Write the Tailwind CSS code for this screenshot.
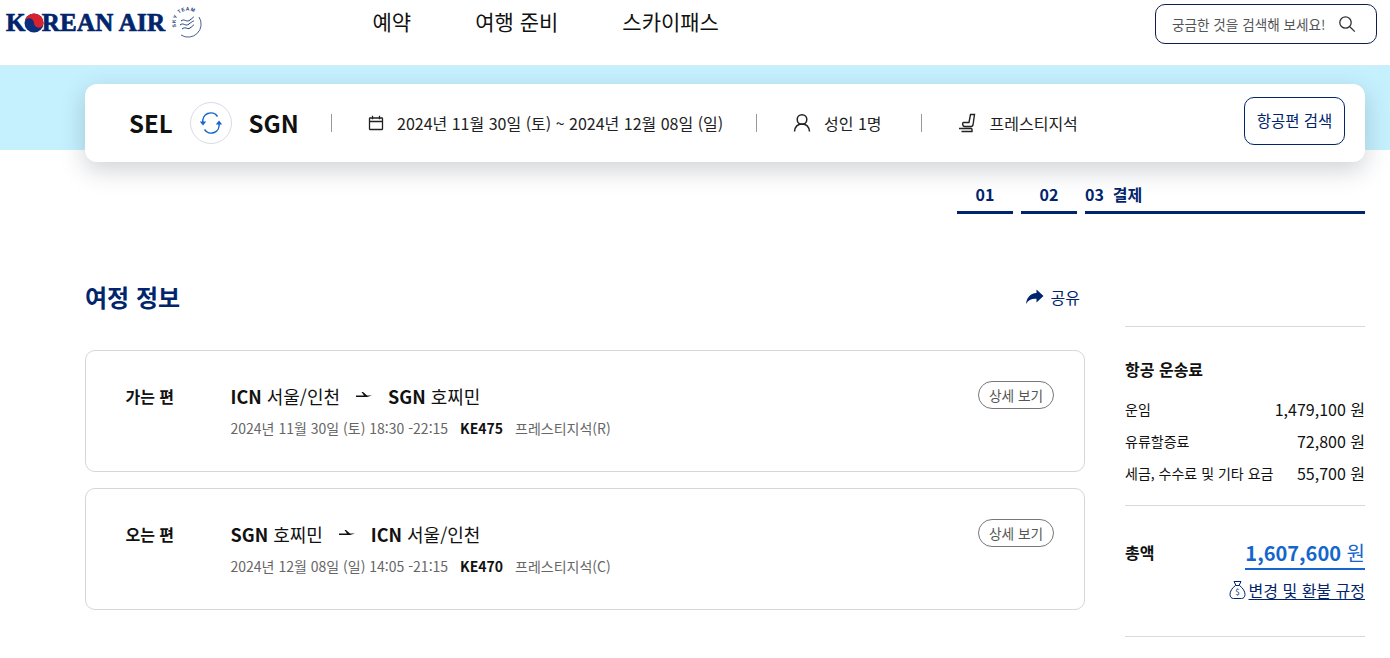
<!doctype html>
<html lang="ko"><head><meta charset="utf-8"><script src="https://cdn.jsdelivr.net/npm/@tailwindcss/browser@4"></script></head>
<body class="bg-white h-[658px] overflow-hidden font-['Noto_Sans_CJK_KR','Noto_Sans',sans-serif] text-[#111]">
<header class="h-[65px] flex items-start relative">
  <div class="w-[372.500px] pl-[6px] pt-[6px] flex items-start shrink-0">
    <div class="flex items-center h-[33px] w-[160px] whitespace-nowrap text-[#00256c] font-['Liberation_Serif',serif] font-bold text-[25px] tracking-[0.25px] leading-none [-webkit-text-stroke:0.7px_#00256c]">K<svg class="w-[20px] h-[20px] mx-[-2px] shrink-0" viewBox="0 0 20 20"><circle cx="10" cy="10" r="9.500" fill="#0b2f7c"/><path d="M.5 10A9.500 9.500 0 0 1 19.500 10 4.750 4.750 0 0 1 10 10 4.750 4.750 0 0 0 .5 10Z" fill="#d8232f"/></svg>REAN AIR</div>
    <svg class="w-[32px] h-[32px] ml-[5px] mt-[0px]" viewBox="0 0 32 32" fill="none" stroke="#1c3a75"><defs><path id="arc" d="M5.500 21A12 12 0 0 1 26 9"/></defs><path d="M28 11a13 13 0 0 1-18 18" stroke-width=".8"/><path d="M10 15c4-3 5 2 9-1s3-3 4-3M9 19c4-3 5 2 9-1s4-3 5-3M11 23c4-3 5 1 8-1s3-3 4-3" stroke-width="1"/><text font-size="5" fill="#1c3a75" stroke="none" font-family="Liberation Sans" font-weight="700" letter-spacing=".6"><textPath href="#arc">SKY TEAM</textPath></text></svg>
  </div>
  <nav class="flex gap-[64px] text-[21px] leading-[28px] pt-[7px] text-[#111]"><span>예약</span><span>여행 준비</span><span>스카이패스</span></nav>
  <div class="absolute left-[1155px] top-[4px] w-[222px] h-[40px] border border-[#0e1f4d] rounded-[10px] flex items-center pl-[16px] gap-[13px] text-[13.600px] text-[#555]"><span>궁금한 것을 검색해 보세요!</span><svg class="w-[18px] h-[18px]" viewBox="0 0 18 18" fill="none" stroke="#333" stroke-width="1.300"><circle cx="7.500" cy="7.500" r="5.700"/><path d="m11.800 11.800 5 4.800"/></svg></div>
</header>
<div class="h-[85px] bg-[#c5f0fe] border-t border-[#d5ecf5] pl-[85px] pr-[25px] pt-[18px]">
  <section class="h-[78px] bg-white rounded-xl shadow-[0_8px_24px_rgba(40,50,70,0.22)] flex items-center pl-[44px] relative">
    <b class="text-[24px] font-bold w-[61px]">SEL</b>
    <span class="w-[42px] h-[42px] rounded-full border border-[#d6dde5] flex items-center justify-center"><svg class="w-[24px] h-[24px]" viewBox="0 0 24 24" fill="none" stroke="#1466cc" stroke-width="1.500"><path d="M4 11.500A8 8 0 0 1 18.500 5.500M20 12.500A8 8 0 0 1 5.500 18.500"/><path d="M.8 10.500h6.400L4 14.500ZM23.200 13.500h-6.400l3.200-4Z" fill="#1466cc" stroke="none"/></svg></span>
    <b class="text-[24px] font-bold ml-[16.500px] w-[82.500px]">SGN</b>
    <span class="w-px h-[18px] bg-[#999]"></span>
    <svg class="w-[16px] h-[16px] ml-[36px]" viewBox="0 0 16 16" fill="none" stroke="#222" stroke-width="1.300"><rect x="1.500" y="3" width="13" height="11.500" rx=".5"/><path d="M1.500 6.500h13M4.500 .8v3.500M11.500 .8v3.500"/></svg>
    <span class="ml-[13px] w-[359px] text-[16px] text-[#222]">2024년 11월 30일 (토) ~ 2024년 12월 08일 (일)</span>
    <span class="w-px h-[18px] bg-[#999]"></span>
    <svg class="w-[18px] h-[20px] ml-[36px]" viewBox="0 0 18 20" fill="none" stroke="#222" stroke-width="1.500"><circle cx="9" cy="6.500" r="4.800"/><path d="M1.500 18.500c.5-5 3.500-7.500 7.500-7.500s7 2.500 7.500 7.500"/></svg>
    <span class="ml-[13px] w-[97px] text-[16px] text-[#222]">성인 1명</span>
    <span class="w-px h-[18px] bg-[#999]"></span>
    <svg class="w-[18px] h-[20px] ml-[36px]" viewBox="0 0 18 20" fill="none" stroke="#222" stroke-width="1.400"><path d="M12.500 1.500h4L15 12c-.2 1-.8 1.500-2 1.500H6.500c-2 0-2.500-4-1-4h5.500ZM1 15.500h13M3.500 18.500h10.500v-3"/></svg>
    <span class="ml-[13.500px] text-[16px] text-[#222]">프레스티지석</span>
    <button class="absolute left-[1159px] top-[13px] w-[101px] h-[48px] border border-[#00256c] rounded-[10px] text-[15.500px] text-[#00256c]">항공편 검색</button>
  </section>
</div>
<main class="pl-[85px] pr-[25px] relative">
  <div class="flex justify-end gap-[8px] pt-[33px] h-[64px] text-[#00256c] font-bold text-[16px] leading-[22px]">
    <div class="w-[56px] h-[31px] border-b-[3px] border-[#00256c] text-center">01</div>
    <div class="w-[56px] h-[31px] border-b-[3px] border-[#00256c] text-center">02</div>
    <div class="w-[280px] h-[31px] border-b-[3px] border-[#00256c] whitespace-pre">03  결제</div>
  </div>
  <div class="flex gap-[40px]">
    <div class="w-[1000px] shrink-0">
      <div class="flex justify-between items-center pt-[67px] pr-[5px] h-[113px]">
        <h1 class="text-[24px] font-bold text-[#00256c] leading-[34px] pb-[15px]">여정 정보</h1>
        <span class="flex items-center gap-[7px] text-[16px] text-[#00256c] pb-[15px]"><svg class="w-[19px] h-[16px]" viewBox="0 0 18 16" fill="#00256c"><path d="M11 .5 18 7l-7 6.500V9.800C6 9.500 3 11 .5 15 1 9 4.500 4.500 11 4Z"/></svg>공유</span>
      </div>
      <article class="h-[122px] mt-[23px] border border-[#d4d6da] rounded-[10px] flex relative">
        <b class="w-[144.500px] pt-[34px] text-center text-[16px] leading-[22px] font-bold pr-[17px]">가는 편</b>
        <div class="pt-[32px]">
          <div class="flex items-center text-[18px] leading-[26px]"><b class="font-bold mr-[5px]">ICN</b>서울/인천<svg class="w-[16px] h-[8px] mx-[16px]" viewBox="0 0 16 8" fill="#111"><path d="M0 3.500h8L5.500 0h1.500l4 3.500h5L11 5H0Z"/></svg><b class="font-bold mr-[5px]">SGN</b>호찌민</div>
          <div class="mt-[9px] text-[14px] leading-[20px] text-[#666] flex"><span>2024년 11월 30일 (토) 18:30 -22:15</span><b class="font-bold text-[#111] mx-[12px]">KE475</b><span>프레스티지석(R)</span></div>
        </div>
        <span class="absolute right-[30px] top-[30px] w-[76px] h-[28px] rounded-full border border-[#777] text-[13.700px] text-[#555] flex items-center justify-center">상세 보기</span>
      </article>
      <article class="h-[122px] mt-[16px] border border-[#d4d6da] rounded-[10px] flex relative">
        <b class="w-[144.500px] pt-[34px] text-center text-[16px] leading-[22px] font-bold pr-[17px]">오는 편</b>
        <div class="pt-[32px]">
          <div class="flex items-center text-[18px] leading-[26px]"><b class="font-bold mr-[5px]">SGN</b>호찌민<svg class="w-[16px] h-[8px] mx-[16px]" viewBox="0 0 16 8" fill="#111"><path d="M0 3.500h8L5.500 0h1.500l4 3.500h5L11 5H0Z"/></svg><b class="font-bold mr-[5px]">ICN</b>서울/인천</div>
          <div class="mt-[9px] text-[14px] leading-[20px] text-[#666] flex"><span>2024년 12월 08일 (일) 14:05 -21:15</span><b class="font-bold text-[#111] mx-[12px]">KE470</b><span>프레스티지석(C)</span></div>
        </div>
        <span class="absolute right-[30px] top-[30px] w-[76px] h-[28px] rounded-full border border-[#777] text-[13.700px] text-[#555] flex items-center justify-center">상세 보기</span>
      </article>
    </div>
    <aside class="w-[240px] shrink-0 pt-[112px]">
      <div class="border-t border-[#d9d9d9] pt-[31px] h-[180px] border-b">
        <h2 class="text-[16px] font-bold leading-[22px] mb-[13px]">항공 운송료</h2>
        <div class="flex justify-between items-center h-[32px] text-[14px]"><span>운임</span><span class="text-[16px]">1,479,100 원</span></div>
        <div class="flex justify-between items-center h-[32px] text-[14px]"><span>유류할증료</span><span class="text-[16px]">72,800 원</span></div>
        <div class="flex justify-between items-center h-[32px] text-[14px]"><span>세금, 수수료 및 기타 요금</span><span class="text-[16px]">55,700 원</span></div>
      </div>
      <div class="h-[131px] border-b border-[#d9d9d9] relative">
        <b class="absolute left-0 top-[35px] text-[16px] font-bold leading-[22px]">총액</b>
        <div class="absolute right-0 top-[32px] h-[32px] border-b-2 border-[#1466cc] text-[#1466cc] text-[20px] leading-[30px] w-[120px] text-right whitespace-nowrap"><b class="font-bold">1,607,600</b> 원</div>
        <div class="absolute right-0 top-[73px] flex items-center gap-[3px] text-[16px] leading-[22px] text-[#00256c]"><svg class="w-[17px] h-[20px]" viewBox="0 0 17 20" fill="none" stroke="#00256c" stroke-width="1"><path d="M5 1.500h7l-2 4h-3ZM6.500 5.500C3 8 1 11.500 1 14.500c0 2.500 1.500 4 3.500 4h8c2 0 3.500-1.500 3.500-4 0-3-2-6.500-5.500-9Z"/><text x="8.500" y="15" text-anchor="middle" font-size="8" fill="#00256c" stroke="none">$</text></svg><u class="underline underline-offset-2">변경 및 환불 규정</u></div>
      </div>
    </aside>
  </div>
</main>
</body></html>
